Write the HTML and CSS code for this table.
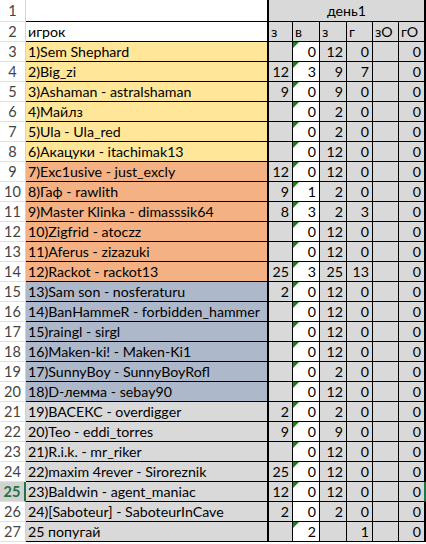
FILE: index.html
```html
<!DOCTYPE html>
<html>
<head>
<meta charset="utf-8">
<link rel="stylesheet" href="styles.css">
</head>
<body>
<div class="sheet">
  <div class="rh r1">1</div><div class="nm r1 white"></div><div class="day r1">день1</div>

  <div class="rh">2</div><div class="nm white">игрок</div>
  <div class="h">з</div><div class="h">в</div><div class="h">з</div><div class="h">г</div><div class="h">зО</div><div class="h last">гО</div>

  <div class="rh">3</div><div class="nm y">1)Sem Shephard</div>
  <div class="d"></div><div class="d w t">0</div><div class="d">12</div><div class="d">0</div><div class="d"></div><div class="d last">0</div>

  <div class="rh">4</div><div class="nm y">2)Big_zi</div>
  <div class="d">12</div><div class="d w t">3</div><div class="d">9</div><div class="d">7</div><div class="d"></div><div class="d last">0</div>

  <div class="rh">5</div><div class="nm y">3)Ashaman - astralshaman</div>
  <div class="d">9</div><div class="d w t">0</div><div class="d">9</div><div class="d">0</div><div class="d"></div><div class="d last">0</div>

  <div class="rh">6</div><div class="nm y">4)Майлз</div>
  <div class="d"></div><div class="d w t">0</div><div class="d">2</div><div class="d">0</div><div class="d"></div><div class="d last">0</div>

  <div class="rh">7</div><div class="nm y">5)Ula - Ula_red</div>
  <div class="d"></div><div class="d w t">0</div><div class="d">2</div><div class="d">0</div><div class="d"></div><div class="d last">0</div>

  <div class="rh">8</div><div class="nm y">6)Акацуки - itachimak13</div>
  <div class="d"></div><div class="d w t">0</div><div class="d">12</div><div class="d">0</div><div class="d"></div><div class="d last">0</div>

  <div class="rh">9</div><div class="nm o">7)Exc1usive - just_excly</div>
  <div class="d">12</div><div class="d w t">0</div><div class="d">12</div><div class="d">0</div><div class="d"></div><div class="d last">0</div>

  <div class="rh">10</div><div class="nm o">8)Гаф - rawlith</div>
  <div class="d">9</div><div class="d w t">1</div><div class="d">2</div><div class="d">0</div><div class="d"></div><div class="d last">0</div>

  <div class="rh">11</div><div class="nm o">9)Master Klinka - dimasssik64</div>
  <div class="d">8</div><div class="d w t">3</div><div class="d">2</div><div class="d">3</div><div class="d"></div><div class="d last">0</div>

  <div class="rh">12</div><div class="nm o">10)Zigfrid - atoczz</div>
  <div class="d"></div><div class="d w t">0</div><div class="d">12</div><div class="d">0</div><div class="d"></div><div class="d last">0</div>

  <div class="rh">13</div><div class="nm o">11)Aferus - zizazuki</div>
  <div class="d"></div><div class="d w t">0</div><div class="d">12</div><div class="d">0</div><div class="d"></div><div class="d last">0</div>

  <div class="rh">14</div><div class="nm o">12)Rackot - rackot13</div>
  <div class="d">25</div><div class="d w t">3</div><div class="d">25</div><div class="d">13</div><div class="d"></div><div class="d last">0</div>

  <div class="rh">15</div><div class="nm b">13)Sam son - nosferaturu</div>
  <div class="d">2</div><div class="d w t">0</div><div class="d">12</div><div class="d">0</div><div class="d"></div><div class="d last">0</div>

  <div class="rh">16</div><div class="nm b">14)BanHammeR - forbidden_hammer</div>
  <div class="d"></div><div class="d w t">0</div><div class="d">12</div><div class="d">0</div><div class="d"></div><div class="d last">0</div>

  <div class="rh">17</div><div class="nm b">15)raingl - sirgl</div>
  <div class="d"></div><div class="d w t">0</div><div class="d">12</div><div class="d">0</div><div class="d"></div><div class="d last">0</div>

  <div class="rh">18</div><div class="nm b">16)Maken-ki! - Maken-Ki1</div>
  <div class="d"></div><div class="d w t">0</div><div class="d">12</div><div class="d">0</div><div class="d"></div><div class="d last">0</div>

  <div class="rh">19</div><div class="nm b">17)SunnyBoy - SunnyBoyRofl</div>
  <div class="d"></div><div class="d w t">0</div><div class="d">2</div><div class="d">0</div><div class="d"></div><div class="d last">0</div>

  <div class="rh">20</div><div class="nm b">18)D-лемма - sebay90</div>
  <div class="d"></div><div class="d w t">0</div><div class="d">12</div><div class="d">0</div><div class="d"></div><div class="d last">0</div>

  <div class="rh">21</div><div class="nm g">19)ВАСЕКС - overdigger</div>
  <div class="d">2</div><div class="d w t">0</div><div class="d">2</div><div class="d">0</div><div class="d"></div><div class="d last">0</div>

  <div class="rh">22</div><div class="nm g">20)Teo - eddi_torres</div>
  <div class="d">9</div><div class="d w t">0</div><div class="d">9</div><div class="d">0</div><div class="d"></div><div class="d last">0</div>

  <div class="rh">23</div><div class="nm g">21)R.i.k. - mr_riker</div>
  <div class="d"></div><div class="d w t">0</div><div class="d">12</div><div class="d">0</div><div class="d"></div><div class="d last">0</div>

  <div class="rh">24</div><div class="nm g">22)maxim 4rever - Siroreznik</div>
  <div class="d">25</div><div class="d w t">0</div><div class="d">12</div><div class="d">0</div><div class="d"></div><div class="d last">0</div>

  <div class="rh sel">25</div><div class="nm g">23)Baldwin - agent_maniac</div>
  <div class="d">12</div><div class="d w t">0</div><div class="d">12</div><div class="d">0</div><div class="d"></div><div class="d last selr">0</div>

  <div class="rh">26</div><div class="nm g">24)[Saboteur] - SaboteurInCave</div>
  <div class="d">2</div><div class="d w">0</div><div class="d">2</div><div class="d">0</div><div class="d"></div><div class="d last">0</div>

  <div class="rh">27</div><div class="nm g">25 попугай</div>
  <div class="d"></div><div class="d w t">2</div><div class="d"></div><div class="d">1</div><div class="d"></div><div class="d last">0</div>
</div>
</body>
</html>
```
FILE: styles.css
```css
* { box-sizing: border-box; }
html, body { margin: 0; padding: 0; background: #fff; }
body {
  font-family: Lato, "Liberation Sans", sans-serif;
  font-size: 14.2px;
  color: #000;
}
.sheet {
  display: grid;
  grid-template-columns: 26px 243px 24px 27px 27px 26px 26px 27px;
  grid-template-rows: 22px;
  grid-auto-rows: 20px;
  width: 426px;
}
.sheet > div {
  border-right: 1px solid #000;
  border-bottom: 1px solid #000;
  line-height: 20px;
  white-space: nowrap;
  overflow: hidden;
  position: relative;
}
.sheet > .r1 { line-height: 22px; }
.sheet > .rh {
  border-right: 1px solid #d4d4d4;
  border-bottom: 1px solid #e1e1e1;
  color: #444;
  text-align: center;
  font-size: 14.5px;
}
.sheet > .rh.sel {
  background: #d2d2d2;
  color: #217346;
  font-weight: bold;
  border-right: 2px solid #217346;
}
.sheet > .nm {
  border-right: 2px solid #000;
  padding-left: 2px;
}
.white { background: #fff; }
.y { background: #ffe699; }
.o { background: #f4b183; }
.b { background: #adb9ca; }
.g { background: #d9d9d9; }
.day {
  grid-column: 3 / span 6;
  background: #d9d9d9;
  text-align: center;
  border-right-width: 2px !important;
}
.h {
  background: #d9d9d9;
  padding-left: 2px;
}
.d {
  background: #d9d9d9;
  text-align: right;
  padding-right: 3px;
}
.d.w { background: #fff; }
.t::before {
  content: "";
  position: absolute;
  left: 0;
  top: 0;
  border-top: 6px solid #1a7f1a;
  border-right: 6px solid transparent;
}
.sheet > .last { border-right-width: 2px; }
.sheet > .selr { border-right-color: #217346; }
```
